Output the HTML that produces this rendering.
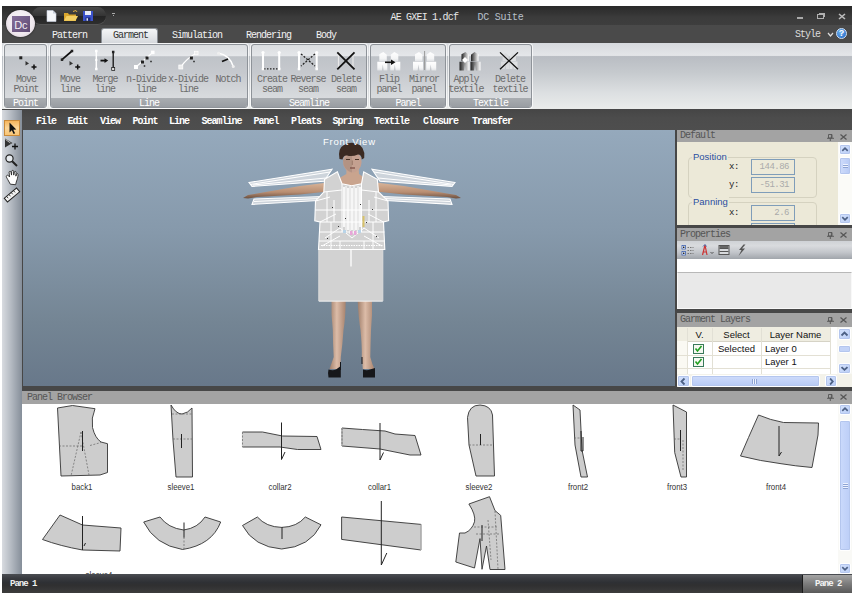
<!DOCTYPE html>
<html>
<head>
<meta charset="utf-8">
<title>DC Suite</title>
<style>
html,body{margin:0;padding:0;background:#fff;}
body{width:855px;height:598px;position:relative;overflow:hidden;font-family:"Liberation Mono",monospace;font-size:10px;letter-spacing:-1px;color:#333;}
.a{position:absolute;}
.t{position:absolute;white-space:nowrap;line-height:10px;}
#app{left:2px;top:6px;width:850px;height:587px;background:#474747;}
/* title */
#title{left:0;top:0;width:850px;height:20px;background:linear-gradient(#2a2a2a,#353535 40%,#3b3b3b 55%,#3e3e3e);}
#tabs{left:0;top:19px;width:850px;height:18px;background:#4a4a4a;}
#ribbon{left:0;top:37px;width:850px;height:66px;background:linear-gradient(#d6d9dd 0,#e3e5e8 18%,#e0e2e5 19.5%,#b9bdc3 20.5%,#c6cace 45%,#dcdfe1 75%,#eaeceb 100%);}
.grp{position:absolute;top:1px;height:64px;border:1px solid #8e9399;border-radius:3px;box-sizing:border-box;background:linear-gradient(#dadde0 0,#e4e6e9 17%,#bfc3c8 19%,#c6c9ce 45%,#d6d9dc 80%,#dddfe2 100%);box-shadow:0 0 0 1px rgba(255,255,255,.7);overflow:hidden;}
.grp .ft{position:absolute;left:0;right:0;bottom:0;height:9px;background:linear-gradient(#a9adb1,#999da2);color:#fff;text-align:center;line-height:11px;}
.lb{position:absolute;text-align:center;line-height:9.5px;color:#6c6c6c;white-space:nowrap;transform:translateX(-50%);}
#menubar{left:0;top:104px;width:850px;height:19.5px;background:linear-gradient(#464646,#4c4c4c 40%,#4e4e4e);}
.mi{position:absolute;top:7px;color:#fff;font-weight:bold;line-height:10px;white-space:nowrap;}
#ltool{left:0;top:104px;width:20px;height:464px;background:linear-gradient(90deg,#d8dbe0,#b4bac2 45%,#858e99);}
#view{left:21px;top:124px;width:651.5px;height:256px;background:linear-gradient(#95a9bc,#8699ab 40%,#748594 75%,#68788a 100%);}
.ph{position:absolute;background:#a3a3a3;color:#555;height:13px;line-height:13px;}
</style>
</head>
<body>
<div id="app" class="a">
  <div id="title" class="a">
    <div class="a" style="left:30px;top:1px;width:74px;height:17px;border-radius:9px;background:linear-gradient(#4a4a4a,#353535 50%,#242424 55%,#2e2e2e);box-shadow:0 1px 0 #555;"></div>
    <svg class="a" style="left:44px;top:4px" width="52" height="12" viewBox="0 0 52 12">
      <path d="M1 0.5h6l3 3v8h-9z" fill="#f4f6fa" stroke="#c9d2e0" stroke-width=".6"/>
      <path d="M7 0.5v3h3z" fill="#c5ccd8"/>
      <path d="M18 3h4l1 1.5h7v6.500h-12z" fill="#d9a62e"/>
      <path d="M18 10.800l2.500-4.800h11.500l-2.500 4.800z" fill="#f3cf63"/>
      <path d="M27 1.500l3-1 1 1.500" fill="none" stroke="#e0b040" stroke-width="1"/>
      <rect x="37" y="1" width="10" height="10" fill="#3b52c9"/>
      <rect x="39" y="1" width="6" height="4" fill="#e8ecf8"/>
      <rect x="39.500" y="7.500" width="5" height="3.500" fill="#1c2a7a"/>
      <rect x="40.500" y="8.200" width="1.500" height="2.500" fill="#dfe4f4"/>
    </svg>
    <div class="a" style="left:110px;top:7px;width:3px;height:1px;background:#aaa"></div>
    <div class="a" style="left:111px;top:9px;width:1px;height:1px;background:#aaa"></div>
    <div class="t" style="left:388.500px;top:6.500px;color:#e8e8e8;letter-spacing:-.8px">AE GXEI 1.dcf</div>
    <div class="t" style="left:475.500px;top:6.500px;color:#b8c0cc;letter-spacing:-.25px">DC Suite</div>
    <div class="a" style="left:795px;top:11px;width:6px;height:1.500px;background:#a9a9a9"></div>
    <div class="a" style="left:815px;top:8px;width:5px;height:2.500px;border:1px solid #b0b0b0"></div><div class="a" style="left:817px;top:7px;width:5px;height:1px;background:#b0b0b0"></div><div class="a" style="left:822px;top:7px;width:1px;height:4px;background:#b0b0b0"></div>
    <svg class="a" style="left:836px;top:7px" width="8" height="7" viewBox="0 0 8 7"><path d="M1 1l6 5M7 1l-6 5" stroke="#bdbdbd" stroke-width="1.600"/></svg>
  </div>
  <div id="tabs" class="a">
    <div class="a" style="left:99px;top:3px;width:57px;height:16px;border-radius:3px 3px 0 0;background:linear-gradient(#f4f5f6,#e2e4e7 60%,#d3d6da);border:1px solid #8a8f95;border-bottom:none;box-sizing:border-box"></div>
    <div class="t" style="left:50px;top:6px;color:#f2f2f2;">Pattern</div>
    <div class="t" style="left:111px;top:6px;color:#333;">Garment</div>
    <div class="t" style="left:170px;top:6px;color:#f2f2f2;">Simulation</div>
    <div class="t" style="left:244px;top:6px;color:#f2f2f2;">Rendering</div>
    <div class="t" style="left:314px;top:6px;color:#f2f2f2;">Body</div>
    <div class="t" style="left:793px;top:5px;color:#ddd;">Style</div>
    <svg class="a" style="left:825px;top:7px" width="7" height="5" viewBox="0 0 7 5"><path d="M1 1l2.500 3 2.500-3" stroke="#ddd" fill="none" stroke-width="1.200"/></svg>
    <div class="a" style="left:834px;top:3px;width:11px;height:11px;border-radius:6px;background:radial-gradient(circle at 40% 35%,#6fb4f0,#1a5fc0);border:1px solid #cfe2f8;box-sizing:border-box;color:#fff;font:bold 9px 'Liberation Sans',sans-serif;letter-spacing:0;text-align:center;line-height:9px;">?</div>
  </div>
  <div class="a" style="left:3.500px;top:3.500px;width:29.500px;height:27.500px;border-radius:50%;background:radial-gradient(ellipse at 50% 42%,#faf7f9 0,#efe8ee 60%,#d6ccd5 88%,#b3a8b2 100%);box-shadow:0 0 2px #111;"></div>
  <div class="a" style="left:10px;top:9.500px;width:17.500px;height:16px;background:linear-gradient(135deg,#866f9a,#5f4b74);color:#f4f0f6;font:11px 'Liberation Sans',sans-serif;letter-spacing:-.3px;text-align:center;line-height:18px;">Dc</div>
  <div id="ribbon" class="a">
    <div class="grp" style="left:2px;width:43px;"><div class="ft">Point</div></div>
    <div class="grp" style="left:48px;width:198px;"><div class="ft">Line</div></div>
    <div class="grp" style="left:249px;width:116px;"><div class="ft">Seamline</div></div>
    <div class="grp" style="left:368px;width:76px;"><div class="ft">Panel</div></div>
    <div class="grp" style="left:447px;width:83px;"><div class="ft">Textile</div></div>
    <div class="lb" style="left:24px;top:32px;">Move<br>Point</div>
    <div class="lb" style="left:68px;top:32px;">Move<br>line</div>
    <div class="lb" style="left:103px;top:32px;">Merge<br>line</div>
    <div class="lb" style="left:144px;top:32px;">n-Divide<br>line</div>
    <div class="lb" style="left:186px;top:32px;">x-Divide<br>line</div>
    <div class="lb" style="left:226px;top:32px;">Notch<br></div>
    <div class="lb" style="left:270px;top:32px;">Create<br>seam</div>
    <div class="lb" style="left:306px;top:32px;">Reverse<br>seam</div>
    <div class="lb" style="left:344px;top:32px;">Delete<br>seam</div>
    <div class="lb" style="left:387px;top:32px;">Flip<br>panel</div>
    <div class="lb" style="left:422px;top:32px;">Mirror<br>panel</div>
    <div class="lb" style="left:464px;top:32px;">Apply<br>textile</div>
    <div class="lb" style="left:508px;top:32px;">Delete<br>textile</div>
    <svg class="a" style="left:0;top:0" width="850" height="66" viewBox="2 43 850 66"><defs><linearGradient id="bw" x1="0" x2="1" y1="0" y2="0"><stop offset="0" stop-color="#222"/><stop offset="1" stop-color="#fff"/></linearGradient><linearGradient id="wg" x1="0" x2="0" y1="0" y2="1"><stop offset="0" stop-color="#fff"/><stop offset=".7" stop-color="#f4f5f6"/><stop offset="1" stop-color="#e0e2e5"/></linearGradient></defs>
<path d="M379.3 54.2 L383.3 52.0 L386.8 54.8 L386.8 61.2 L379.3 61.2z" fill="url(#wg)"/><path d="M377.3 61.8 L387.3 61.8 L387.3 70.5 L383.7 70.5 L382.8 64.6 L381.9 70.5 L377.3 70.5z" fill="url(#wg)"/><path d="M398.3 54.2 L394.3 52.0 L390.8 54.8 L390.8 61.2 L398.3 61.2z" fill="url(#wg)"/><path d="M400.3 61.8 L390.3 61.8 L390.3 70.5 L393.9 70.5 L394.8 64.6 L395.7 70.5 L400.3 70.5z" fill="url(#wg)"/><path d="M415.0 54.2 L419.0 52.0 L422.5 54.8 L422.5 61.2 L415.0 61.2z" fill="url(#wg)"/><path d="M413.0 61.8 L423.0 61.8 L423.0 70.5 L419.4 70.5 L418.5 64.6 L417.6 70.5 L413.0 70.5z" fill="url(#wg)"/><path d="M434.2 54.2 L430.2 52.0 L426.7 54.8 L426.7 61.2 L434.2 61.2z" fill="url(#wg)"/><path d="M436.2 61.8 L426.2 61.8 L426.2 70.5 L429.8 70.5 L430.7 64.6 L431.6 70.5 L436.2 70.5z" fill="url(#wg)"/><path d="M461.5 54.2 L465.5 52.0 L469.0 54.8 L469.0 61.2 L461.5 61.2z" fill="url(#bw)"/><path d="M459.5 61.8 L469.5 61.8 L469.5 70.5 L465.9 70.5 L465.0 64.6 L464.1 70.5 L459.5 70.5z" fill="url(#bw)"/><path d="M478.5 54.2 L474.5 52.0 L471.0 54.8 L471.0 61.2 L478.5 61.2z" fill="url(#bw)"/><path d="M480.5 61.8 L470.5 61.8 L470.5 70.5 L474.1 70.5 L475.0 64.6 L475.9 70.5 L480.5 70.5z" fill="url(#bw)"/><path d="M502.6 54.9 L505.8 53.0 L508.6 55.4 L508.6 61.0 L502.6 61.0z" fill="#d9dbde"/><path d="M501.0 61.5 L509.0 61.5 L509.0 69.0 L506.1 69.0 L505.4 63.9 L504.7 69.0 L501.0 69.0z" fill="#d9dbde"/><path d="M515.9 54.9 L512.7 53.0 L509.9 55.4 L509.9 61.0 L515.9 61.0z" fill="#dfe1e3"/><path d="M517.5 61.5 L509.5 61.5 L509.5 69.0 L512.4 69.0 L513.1 63.9 L513.8 69.0 L517.5 69.0z" fill="#dfe1e3"/>
<rect x="19.3" y="56.3" width="3" height="3" fill="#222"/><path d="M25.5 60.9l3.5 2.7-3.500 2z" fill="#333"/><path d="M31.5 67h5.0M34 64.5v5.0" stroke="#111" stroke-width="1.5"/><path d="M62 59.700L72 51" stroke="#111" stroke-width="1.7"/><rect x="60.75" y="58.45" width="2.5" height="2.5" fill="#222"/><rect x="70.75" y="49.75" width="2.5" height="2.5" fill="#222"/><path d="M69.5 60.9l3.5 2.7-3.500 2z" fill="#333"/><path d="M75.2 67h5.0M77.7 64.5v5.0" stroke="#111" stroke-width="1.5"/><path d="M96.300 51v18" stroke="#fff" stroke-width="1.500"/><rect x="95.05" y="49.75" width="2.5" height="2.5" fill="#fff"/><rect x="95.05" y="67.75" width="2.5" height="2.5" fill="#fff"/><rect x="95.3" y="59.0" width="2" height="2" fill="#fff"/><path d="M100.500 60.600h5" stroke="#111" stroke-width="1.800"/><path d="M104.500 58.300l3.700 2.300-3.700 2.300z" fill="#111"/><path d="M113.200 52v17" stroke="#111" stroke-width="1.300"/><rect x="111.95" y="50.75" width="2.5" height="2.5" fill="#222"/><rect x="111.7" y="67.5" width="3" height="3" fill="#ddd" stroke="#111" stroke-width=".7"/><path d="M136 67L152.800 52.400" stroke="#fff" stroke-width="1.200"/><rect x="134.0" y="65.0" width="4" height="4" fill="#fff"/><rect x="151.05" y="50.65" width="3.5" height="3.5" fill="#fff"/><rect x="141.0" y="60.5" width="3" height="3" fill="#222"/><rect x="145.5" y="56.5" width="3" height="3" fill="#222"/><rect x="143.75" y="65.25" width="1.5" height="1.5" fill="#222"/><rect x="150.25" y="60.75" width="1.5" height="1.5" fill="#222"/><path d="M180.800 67Q186 59 196.300 53" stroke="#fff" stroke-width="1.200" fill="none"/><rect x="178.8" y="65.0" width="4" height="4" fill="#eee" stroke="#fff" stroke-width=".7"/><rect x="194.55" y="51.25" width="3.5" height="3.5" fill="#eee" stroke="#fff" stroke-width=".7"/><rect x="189.9" y="56.5" width="3" height="3" fill="#222"/><rect x="193.25" y="60.75" width="1.5" height="1.5" fill="#222"/><path d="M218 53Q230 55 233.500 67" stroke="#fff" stroke-width="1.500" fill="none"/><circle cx="218.500" cy="53.300" r="1.500" fill="#eee"/><circle cx="233.300" cy="66.500" r="1.500" fill="#eee"/><path d="M222 61.500L228 59" stroke="#111" stroke-width="1.800"/><path d="M263 52v17M279.200 52v17" stroke="#fff" stroke-width="2"/><circle cx="263" cy="52.500" r="1.600" fill="#fff"/><circle cx="279.200" cy="52.500" r="1.600" fill="#fff"/><path d="M264 68.800h15" stroke="#222" stroke-width="1.200" stroke-dasharray="1.5 1.500"/><rect x="261.75" y="67.75" width="2.5" height="2.5" fill="#fff"/><rect x="277.95" y="67.75" width="2.5" height="2.5" fill="#fff"/><path d="M299 52v17M316.700 52v17" stroke="#fff" stroke-width="2"/><circle cx="299" cy="52.500" r="1.600" fill="#fff"/><circle cx="316.700" cy="52.500" r="1.600" fill="#fff"/><path d="M301 54l14 12M315 54l-14 12" stroke="#222" stroke-width="1.300" stroke-dasharray="2 1.500"/><rect x="297.75" y="67.75" width="2.5" height="2.5" fill="#fff"/><rect x="315.45" y="67.75" width="2.5" height="2.5" fill="#fff"/><path d="M338.500 53v16M353 53v16" stroke="#e8e8e8" stroke-width="1.200"/><path d="M337.300 52.400L354.500 69.300M354.500 52.400L337.300 69.300" stroke="#111" stroke-width="1.800"/><path d="M385 62.300h7" stroke="#111" stroke-width="1.600"/><path d="M391 59.500l4.500 2.800-4.500 2.800z" fill="#111"/><path d="M424.600 51v19" stroke="#999" stroke-width="1"/><path d="M465 57l3 3-3 3-3-3z" fill="#fff"/><path d="M500 52.400L518 69.300M518 52.400L500 69.300" stroke="#111" stroke-width="1.300"/>
</svg>
  </div>
  <div id="menubar" class="a">
    <div class="mi" style="left:34px">File</div>
    <div class="mi" style="left:65.5px">Edit</div>
    <div class="mi" style="left:98px">View</div>
    <div class="mi" style="left:130.5px">Point</div>
    <div class="mi" style="left:167px">Line</div>
    <div class="mi" style="left:199.5px">Seamline</div>
    <div class="mi" style="left:251.5px">Panel</div>
    <div class="mi" style="left:289px">Pleats</div>
    <div class="mi" style="left:330.5px">Spring</div>
    <div class="mi" style="left:372px">Textile</div>
    <div class="mi" style="left:421px">Closure</div>
    <div class="mi" style="left:470px">Transfer</div>
  </div>
  <div id="ltool" class="a">
    <div class="a" style="left:1.500px;top:9.500px;width:16.500px;height:16.500px;background:linear-gradient(#f6b55c,#fbd69a 50%,#f9c575);border:1px solid #c98a3a;box-sizing:border-box"></div>
    <svg class="a" style="left:0;top:0" width="20" height="110" viewBox="2 110 20 110">
      <path d="M9.500 122.500v10l2.300-2.200 1.800 3.700 1.500-.7-1.800-3.600 3-.200z" fill="#111"/>
      <path d="M5 138.500v9l7.500-4.500z" fill="#333"/><path d="M12 146.500h6M15 143.500v6" stroke="#111" stroke-width="1.300"/><path d="M5.500 139.500l5 3.500" stroke="#ddd" stroke-width=".8"/>
      <circle cx="9.500" cy="158.500" r="3.600" fill="#e6eaee" stroke="#222" stroke-width="1.200"/><path d="M12.200 161.300l4.800 4.700" stroke="#222" stroke-width="2"/>
      <path transform="translate(0.500 3.500) scale(.96)" style="transform-origin:11px 174px" d="M7 176c-1-2-2-3-1-4s2 0 3 1.500l-.5-5c0-1.200 1.800-1.200 2 0l.5 3 .2-4c.2-1.200 1.900-1.200 2 0l.1 4 .7-3.200c.3-1 1.800-.8 1.800.3l-.3 4 .8-2c.5-1 1.800-.5 1.600.5-.5 3-.8 5-1.600 6.500l-1 3.900-5.500-.5z" fill="#fff" stroke="#222" stroke-width=".9"/>
      <g transform="rotate(-40 12 195)"><rect x="4" y="192.500" width="16" height="5" fill="#f4f4f4" stroke="#222" stroke-width="1"/><path d="M7 192.500v2.500M10 192.500v2.500M13 192.500v2.500M16 192.500v2.500" stroke="#222" stroke-width=".8"/></g>
    </svg>
  </div>
  <div id="view" class="a"><svg class="a" style="left:0;top:0" width="653" height="256" viewBox="23 130 653 256">
<defs><linearGradient id="sk" x1="0" x2="0" y1="0" y2="1"><stop offset="0" stop-color="#d9b59a"/><stop offset=".6" stop-color="#b98e72"/><stop offset="1" stop-color="#6b5040"/></linearGradient><linearGradient id="lg" x1="0" x2="1" y1="0" y2="0"><stop offset="0" stop-color="#a07f6b"/><stop offset=".45" stop-color="#dcbca8"/><stop offset="1" stop-color="#a8846f"/></linearGradient></defs>
<polygon points="328.0,182.5 300.0,186.0 257.0,193.5 248.0,195.0 243.0,198.0 248.0,198.5 257.0,197.0 300.0,194.5 328.0,191.5" fill="url(#sk)"/><polygon points="376.0,182.5 404.0,186.0 447.0,193.5 456.0,195.0 461.0,198.0 456.0,198.5 447.0,197.0 404.0,194.5 376.0,191.5" fill="url(#sk)"/>
<polygon points="249.0,182.5 332.0,169.3 324.0,181.2 252.0,186.4" fill="rgba(225,228,232,.75)" stroke="#fff" stroke-width="1.1"/><polygon points="455.0,182.5 372.0,169.3 380.0,181.2 452.0,186.4" fill="rgba(225,228,232,.75)" stroke="#fff" stroke-width="1.1"/><polygon points="252.0,204.4 254.0,199.0 322.0,196.5 318.0,200.5" fill="rgba(225,228,232,.75)" stroke="#fff" stroke-width="1.1"/><polygon points="452.0,204.4 450.0,199.0 382.0,196.5 386.0,200.5" fill="rgba(225,228,232,.75)" stroke="#fff" stroke-width="1.1"/><path d="M250 184.500L330 172M253 185L326 178M254 201.500L320 198.500" stroke="#fff" stroke-width="1" fill="none"/><path d="M454 184.500L374 172M451 185L378 178M450 201.500L384 198.500" stroke="#fff" stroke-width="1" fill="none"/>
<path d="M331.500 301L345.700 301Q345.500 318 343.500 330Q342.500 345 340.800 357Q340.500 364 340.300 369L329.500 369Q332 362 333.700 357Q333 345 332.800 330Q331 315 331.500 301z" fill="url(#lg)"/><path d="M357.700 301L372 301Q372.500 315 371 330Q370.500 345 370.300 357Q372 364 374.500 369L362.800 369Q362.300 362 361.800 357Q362 345 360.500 330Q358.500 318 357.700 301z" fill="url(#lg)"/>
<path d="M328.500 369.500Q333 371 336 369.500L340.800 366L340.800 377.600L328.500 377.600Q327.500 373 328.500 369.500z" fill="#16171a"/><path d="M340.500 362v8" stroke="#16171a" stroke-width="1"/><path d="M363 369.500Q367 371 370 369.500L375 368L375 377.600L363 377.600z" fill="#16171a"/><path d="M362 357v7" stroke="#16171a" stroke-width="1"/>
<path d="M346.500 166L358.500 166L359 174Q363 176.500 365 178.500L363 188L341 188L338.500 178.500Q342 176.500 346.300 174z" fill="#c9a48e"/><ellipse cx="352.300" cy="162" rx="9.300" ry="10.500" fill="#c4a090"/><path d="M343 160Q343 170 352 172.500L352 152z" fill="#a98a7c" opacity=".6"/><path d="M339.500 159Q337.500 148 344 145Q350 141.500 356 143.500Q365.500 146 364.200 158L361.800 159.500Q361.500 154.500 358 154.500Q352 157 347 155.500Q343.500 155 342.500 159.500z" fill="#3b2a22"/><path d="M346 159.500h4M355 159.500h4" stroke="#4a3428" stroke-width="1"/><path d="M350 168h5" stroke="#7a4a42" stroke-width="1.200"/><path d="M352.300 160.500v4.500" stroke="#9a7868" stroke-width="1"/>
<rect x="318.800" y="249" width="64" height="52" fill="#d2d2d2"/><path d="M318.800 301.200h64" stroke="#f4f4f4" stroke-width="1"/><path d="M318.800 249v52M382.800 249v52" stroke="#dcdcdc" stroke-width="1"/>
<polygon points="337.4,171.8 324.6,179.3 323.8,192.0 315.5,201.0 314.8,220.7 320.0,222.0 318.5,249.5 384.8,249.5 383.5,222.0 388.6,220.7 388.0,201.0 378.5,192.0 377.3,179.3 363.7,171.8 361.5,183.8 351.7,185.8 342.0,183.8" fill="#d2d2d2" stroke="#fff" stroke-width="1.1"/><g stroke="#fff" stroke-width="1" fill="none"><path d="M342 184v48M346 186v46M350 186v48M354 186v48M358 186v46M361.500 184v48"/><path d="M344 187v40M348 188v42M352 188v42M356 188v42M360 187v40" stroke-width="1.600"/><path d="M323.800 192L342 190M378.500 192L361.500 190M315.500 201L330 197M388 201L374 197M320 222L336 214M383.500 222L368 214M315 210h73M320 222h63.500M319 232h65.500M319 241h65.800M331 222v27.500M373 222v27.500M340 241v8.500M364 241v8.500M327 192v30M376 192v30M334 200v22M369 200v22"/><path d="M325 238L340 228L352 238L364 228L379 238M322 246L340 236M382 246L364 236"/><path d="M351 249.500v17" stroke-width="1.300"/></g><path d="M321 245.500h62" stroke="#fff" stroke-width="1" stroke-dasharray="1.5 1"/><rect x="362.500" y="216" width="2" height="11" fill="#d8c26a"/><rect x="350" y="231" width="2.500" height="4" fill="#e7a6d8"/><rect x="354" y="231" width="2.500" height="4" fill="#e7a6d8"/><rect x="343" y="230" width="3" height="3" fill="#b8d4e8"/><rect x="358" y="230" width="3" height="3" fill="#b8d4e8"/><g fill="#333"><rect x="332" y="207" width="1" height="1"/><rect x="372" y="209" width="1" height="1"/><rect x="345" y="218" width="1" height="1"/><rect x="366" y="222" width="1" height="1"/><rect x="338" y="226" width="1" height="1"/><rect x="360" y="204" width="1" height="1"/><rect x="376" y="236" width="1" height="1"/><rect x="327" y="238" width="1" height="1"/></g>
<text x="323" y="145" fill="#fff" font-family="Liberation Sans, sans-serif" font-size="9.500" letter-spacing="0" textLength="52">Front View</text>
</svg></div>
  <!--RIGHT-->
  <div class="ph" style="left:675px;top:124px;width:175px;height:12px;line-height:12px;"><span style="margin-left:3px">Default</span></div><svg class="a" style="left:825px;top:128px" width="7" height="7" viewBox="0 0 7 7"><path d="M1.500 .5h3.500v3.500h-3.500zM0 4.300h7M3.300 4.300v2.700" stroke="#555" fill="none" stroke-width=".9"/><path d="M4.400 .5v3.500" stroke="#555" stroke-width=".9"/></svg><svg class="a" style="left:838px;top:128px" width="7" height="6" viewBox="0 0 7 6"><path d="M.5 .5l6 5M6.500 .5l-6 5" stroke="#555" stroke-width="1.200"/></svg><div class="a" style="left:675px;top:136px;width:175px;height:83px;background:#ece9d8;overflow:hidden;font-family:'Liberation Sans',sans-serif;letter-spacing:0"><div class="a" style="left:11px;top:15px;width:127px;height:39px;border:1px solid #d5d2c0;border-radius:4px;"></div><div class="a" style="left:11px;top:60px;width:127px;height:39px;border:1px solid #d5d2c0;border-radius:4px;"></div><div class="a" style="left:15px;top:9px;background:#ece9d8;color:#2a4fa0;font-size:9.500px;line-height:11px;padding:0 1px;">Position</div><div class="a" style="left:15px;top:54px;background:#ece9d8;color:#2a4fa0;font-size:9.500px;line-height:11px;padding:0 1px;">Panning</div><div class="a" style="left:74px;top:17px;width:44px;height:16px;border:1px solid #7f9db9;box-sizing:border-box;background:#ece9d8;color:#aaa;font-size:9px;line-height:14px;text-align:right;padding-right:5px;font-family:'Liberation Mono',monospace;letter-spacing:-.5px">144.86</div><div class="a" style="left:52px;top:20px;color:#222;font-size:9px;line-height:10px;font-family:'Liberation Mono',monospace;letter-spacing:-.5px">x:</div><div class="a" style="left:74px;top:35px;width:44px;height:16px;border:1px solid #7f9db9;box-sizing:border-box;background:#ece9d8;color:#aaa;font-size:9px;line-height:14px;text-align:right;padding-right:5px;font-family:'Liberation Mono',monospace;letter-spacing:-.5px">-51.31</div><div class="a" style="left:52px;top:38px;color:#222;font-size:9px;line-height:10px;font-family:'Liberation Mono',monospace;letter-spacing:-.5px">y:</div><div class="a" style="left:74px;top:63px;width:44px;height:16px;border:1px solid #7f9db9;box-sizing:border-box;background:#ece9d8;color:#aaa;font-size:9px;line-height:14px;text-align:right;padding-right:5px;font-family:'Liberation Mono',monospace;letter-spacing:-.5px">2.6</div><div class="a" style="left:52px;top:66px;color:#222;font-size:9px;line-height:10px;font-family:'Liberation Mono',monospace;letter-spacing:-.5px">x:</div><div class="a" style="left:74px;top:81px;width:44px;height:16px;border:1px solid #7f9db9;box-sizing:border-box;background:#ece9d8;color:#aaa;font-size:9px;line-height:14px;text-align:right;padding-right:5px;font-family:'Liberation Mono',monospace;letter-spacing:-.5px">0</div><div class="a" style="left:52px;top:84px;color:#222;font-size:9px;line-height:10px;font-family:'Liberation Mono',monospace;letter-spacing:-.5px">y:</div><div class="a" style="left:161px;top:0;width:14px;height:83px;background:#fbfbf8"></div><div class="a" style="left:162px;top:2px;width:12px;height:11px;border-radius:2px;background:linear-gradient(135deg,#d6e3fc,#b9cdf6);border:1px solid #fff;box-shadow:0 0 0 1px #b4c6ee inset;box-sizing:border-box"><svg width="10" height="9" viewBox="0 0 11 10" preserveAspectRatio="none" style="position:absolute;left:0;top:0"><path d="M2.500 6.500l3-3 3 3" stroke="#4d6185" stroke-width="1.800" fill="none"/></svg></div><div class="a" style="left:162px;top:71px;width:12px;height:11px;border-radius:2px;background:linear-gradient(135deg,#d6e3fc,#b9cdf6);border:1px solid #fff;box-shadow:0 0 0 1px #b4c6ee inset;box-sizing:border-box"><svg width="10" height="9" viewBox="0 0 11 10" preserveAspectRatio="none" style="position:absolute;left:0;top:0"><path d="M2.500 3.500l3 3 3-3" stroke="#4d6185" stroke-width="1.800" fill="none"/></svg></div><div class="a" style="left:162px;top:15px;width:12px;height:18px;border-radius:2px;background:linear-gradient(90deg,#cfdcfb,#b7caf5);border:1px solid #fff;box-shadow:0 0 0 1px #b4c6ee inset;box-sizing:border-box"><div class="a" style="left:3px;top:6px;width:5px;height:1px;background:#eef3ff;box-shadow:0 2px 0 #eef3ff,0 1px 0 #8ea4d4,0 3px 0 #8ea4d4"></div></div></div><div class="ph" style="left:675px;top:222px;width:175px;height:13px;line-height:13px;"><span style="margin-left:3px">Properties</span></div><svg class="a" style="left:825px;top:226px" width="7" height="7" viewBox="0 0 7 7"><path d="M1.500 .5h3.500v3.500h-3.500zM0 4.300h7M3.300 4.300v2.700" stroke="#555" fill="none" stroke-width=".9"/><path d="M4.400 .5v3.500" stroke="#555" stroke-width=".9"/></svg><svg class="a" style="left:838px;top:226px" width="7" height="6" viewBox="0 0 7 6"><path d="M.5 .5l6 5M6.500 .5l-6 5" stroke="#555" stroke-width="1.200"/></svg><div class="a" style="left:675px;top:235px;width:175px;height:18.500px;background:linear-gradient(#cfd2d6,#d9dbde 25%,#c2c5ca 60%,#9ba0a6)"></div><svg class="a" style="left:675px;top:236px" width="80" height="18" viewBox="677 242 80 18"><g fill="#fff" stroke="#3a5fb0" stroke-width=".8"><rect x="682" y="245.500" width="3.500" height="3.500"/><rect x="682" y="251.500" width="3.500" height="3.500"/></g><g fill="#222"><rect x="683" y="246.500" width="1.500" height="1.500"/><rect x="683" y="252.500" width="1.500" height="1.500"/></g><g stroke="#777" stroke-width="1"><path d="M687.500 247.500h6M687.500 250.500h6M687.500 253.500h6" stroke-dasharray="1.500 1"/></g><g transform="translate(3.500 0)"><path d="M699 255l2.500-10 2 10M699.800 252h3.600" stroke="#c33" stroke-width="1.200" fill="none"/><path d="M699.500 246.500l2-2 1.500 2" stroke="#46a" stroke-width="1" fill="none"/><path d="M707 252l1.500 1.500 1.500-1.500" stroke="#333" stroke-width=".8" fill="none"/></g><g transform="translate(5.500 0)"><rect x="713.500" y="245.500" width="10" height="9" fill="#d8dadd" stroke="#555" stroke-width="1"/><path d="M714 248.500h9M714 251.500h9" stroke="#555" stroke-width="1"/><rect x="714" y="246" width="9" height="2" fill="#666"/></g><g transform="translate(7.500 0.500)"><path d="M736 244l-4.500 5.500h2.500l-3 6 6.500-7.500h-3l3.500-4z" fill="#555"/></g></svg><div class="a" style="left:675px;top:253px;width:175px;height:13px;background:#fff"></div><div class="a" style="left:675px;top:266px;width:175px;height:37px;background:#e9e9e9;border:1px solid #f8f8f8;border-top:1px solid #b8b8b8;box-sizing:border-box"></div><div class="ph" style="left:675px;top:307px;width:175px;height:14px;line-height:14px;"><span style="margin-left:3px">Garment Layers</span></div><svg class="a" style="left:825px;top:311px" width="7" height="7" viewBox="0 0 7 7"><path d="M1.500 .5h3.500v3.500h-3.500zM0 4.300h7M3.300 4.300v2.700" stroke="#555" fill="none" stroke-width=".9"/><path d="M4.400 .5v3.500" stroke="#555" stroke-width=".9"/></svg><svg class="a" style="left:838px;top:311px" width="7" height="6" viewBox="0 0 7 6"><path d="M.5 .5l6 5M6.500 .5l-6 5" stroke="#555" stroke-width="1.200"/></svg><div class="a" style="left:675px;top:321px;width:175px;height:60px;background:#fff;overflow:hidden;font-family:'Liberation Sans',sans-serif;letter-spacing:0;font-size:9.500px;color:#111"><div class="a" style="left:0;top:0;width:154px;height:14px;background:#efede1;border-bottom:1px solid #d6d3c6"></div><div class="a" style="left:0;top:14px;width:10px;height:33px;background:#faf9f3"></div><div class="a" style="left:10px;top:1px;width:1px;height:46px;background:#e2e0d5"></div><div class="a" style="left:35px;top:1px;width:1px;height:46px;background:#e2e0d5"></div><div class="a" style="left:84px;top:1px;width:1px;height:46px;background:#e2e0d5"></div><div class="a" style="left:153px;top:1px;width:1px;height:46px;background:#e2e0d5"></div><div class="a" style="left:0;top:28px;width:154px;height:1px;background:#e3e0d4"></div><div class="a" style="left:0;top:41px;width:154px;height:1px;background:#e3e0d4"></div><div class="a" style="left:10px;top:2px;width:25px;text-align:center;line-height:11px">V.</div><div class="a" style="left:35px;top:2px;width:49px;text-align:center;line-height:11px">Select</div><div class="a" style="left:84px;top:2px;width:69px;text-align:center;line-height:11px">Layer Name</div><div class="a" style="left:35px;top:16px;width:49px;text-align:center;line-height:11px">Selected</div><div class="a" style="left:88px;top:16px;line-height:11px">Layer 0</div><div class="a" style="left:88px;top:29px;line-height:11px">Layer 1</div><div class="a" style="left:16px;top:17px;width:11px;height:10px;border:1px solid #3a7a5a;box-sizing:border-box;background:#f6f8f2"><svg width="9" height="8" viewBox="0 0 9 8" style="position:absolute;left:0;top:0"><path d="M1.500 3.500l2 2.500 4-5" stroke="#21a121" stroke-width="1.600" fill="none"/></svg></div><div class="a" style="left:16px;top:30px;width:11px;height:10px;border:1px solid #3a7a5a;box-sizing:border-box;background:#f6f8f2"><svg width="9" height="8" viewBox="0 0 9 8" style="position:absolute;left:0;top:0"><path d="M1.500 3.500l2 2.500 4-5" stroke="#21a121" stroke-width="1.600" fill="none"/></svg></div><div class="a" style="left:160px;top:0;width:15px;height:47px;background:#f7f7f3"></div><div class="a" style="left:161px;top:1px;width:13px;height:12px;border-radius:2px;background:linear-gradient(135deg,#d6e3fc,#b9cdf6);border:1px solid #fff;box-shadow:0 0 0 1px #b4c6ee inset;box-sizing:border-box"><svg width="11" height="10" viewBox="0 0 11 10" preserveAspectRatio="none" style="position:absolute;left:0;top:0"><path d="M2.500 6.500l3-3 3 3" stroke="#4d6185" stroke-width="1.800" fill="none"/></svg></div><div class="a" style="left:161px;top:36px;width:13px;height:11px;border-radius:2px;background:linear-gradient(135deg,#d6e3fc,#b9cdf6);border:1px solid #fff;box-shadow:0 0 0 1px #b4c6ee inset;box-sizing:border-box"><svg width="11" height="9" viewBox="0 0 11 10" preserveAspectRatio="none" style="position:absolute;left:0;top:0"><path d="M2.500 3.500l3 3 3-3" stroke="#4d6185" stroke-width="1.800" fill="none"/></svg></div><div class="a" style="left:161px;top:18px;width:13px;height:8px;border-radius:2px;background:#c3d3f7;border:1px solid #fff;box-shadow:0 0 0 1px #b4c6ee inset;box-sizing:border-box"></div><div class="a" style="left:0;top:47px;width:175px;height:13px;background:#f3f2ea"></div><div class="a" style="left:0px;top:48px;width:13px;height:12px;border-radius:2px;background:linear-gradient(135deg,#d6e3fc,#b9cdf6);border:1px solid #fff;box-shadow:0 0 0 1px #b4c6ee inset;box-sizing:border-box"><svg width="11" height="10" viewBox="0 0 11 10" preserveAspectRatio="none" style="position:absolute;left:0;top:0"><path d="M6.500 2.500l-3 3 3 3" stroke="#4d6185" stroke-width="1.800" fill="none"/></svg></div><div class="a" style="left:148px;top:48px;width:12px;height:12px;border-radius:2px;background:linear-gradient(135deg,#d6e3fc,#b9cdf6);border:1px solid #fff;box-shadow:0 0 0 1px #b4c6ee inset;box-sizing:border-box"><svg width="10" height="10" viewBox="0 0 11 10" preserveAspectRatio="none" style="position:absolute;left:0;top:0"><path d="M4.500 2.500l3 3-3 3" stroke="#4d6185" stroke-width="1.800" fill="none"/></svg></div><div class="a" style="left:14px;top:48px;width:129px;height:12px;border-radius:2px;background:linear-gradient(#cfdcfb,#b7caf5);border:1px solid #fff;box-shadow:0 0 0 1px #b4c6ee inset;box-sizing:border-box"><div class="a" style="left:60px;top:3px;width:1px;height:5px;background:#8ea4d4;box-shadow:2px 0 0 #8ea4d4,4px 0 0 #8ea4d4,1px 0 0 #eef3ff,3px 0 0 #eef3ff"></div></div></div>
  <!--/RIGHT-->
  <div class="ph" style="left:20px;top:384.500px;width:830px;height:13.500px;line-height:13.500px;z-index:2"><span style="margin-left:5px">Panel Browser</span></div><svg class="a" style="left:825px;top:388px;z-index:3" width="7" height="7" viewBox="0 0 7 7"><path d="M1.500 .5h3.500v3.500h-3.500zM0 4.300h7M3.300 4.300v2.700" stroke="#555" fill="none" stroke-width=".9"/><path d="M4.400 .5v3.500" stroke="#555" stroke-width=".9"/></svg><svg class="a" style="left:838px;top:388px;z-index:3" width="7" height="6" viewBox="0 0 7 6"><path d="M.5 .5l6 5M6.500 .5l-6 5" stroke="#555" stroke-width="1.200"/></svg><div class="a" style="left:20px;top:397px;width:830px;height:171px;background:#fff;overflow:hidden"><svg class="a" style="left:0;top:0" width="830" height="171" viewBox="22 403 830 171"><path d="M57.500 408L72.500 405.500L95 408.700Q91 418 92.500 427.500Q95 438 101 442L107.500 443.700L107.500 472.500L100 475L61 476z" fill="#cdcdcd" stroke="#333" stroke-width=".9" stroke-linejoin="round"/><path d="M59 446h24M90 445.500l11-3M81 432l-10 44M81 432l8 43" stroke="#666" stroke-width=".7" stroke-dasharray="2 1.500" fill="none"/><path d="M82.500 431v20" stroke="#222" stroke-width="1" fill="none"/><path d="M171 405Q176 414 182 414Q188 413 192 408L192.500 477L176 477L173 440z" fill="#cdcdcd" stroke="#333" stroke-width=".9" stroke-linejoin="round"/><path d="M172 414h20M173 439h19" stroke="#666" stroke-width=".7" stroke-dasharray="2 1.500" fill="none"/><path d="M181.500 434v14" stroke="#222" stroke-width="1" fill="none"/><path d="M242.500 432L262.500 432L282.500 436L317 436.500L321 449.500L297.500 449.500L280 447L242.500 447z" fill="#cdcdcd" stroke="#333" stroke-width=".9" stroke-linejoin="round"/><path d="M242.500 432v15" stroke="#cdcdcd" stroke-width="1.200"/><path d="M242.500 432v15" stroke="#666" stroke-width=".7" stroke-dasharray="2 1.500" fill="none"/><path d="M281.500 422.500v37l3.500-7.500" stroke="#222" stroke-width="1" fill="none"/><path d="M342 428L362.500 429.500L385 431L395 434L415 435.500L421 455L410 455L380 449L342 446z" fill="#cdcdcd" stroke="#333" stroke-width=".9" stroke-linejoin="round"/><path d="M342 428v18" stroke="#cdcdcd" stroke-width="1.200"/><path d="M342 428v18" stroke="#666" stroke-width=".7" stroke-dasharray="2 1.500" fill="none"/><path d="M380 423v37l3.500-7.500" stroke="#222" stroke-width="1" fill="none"/><path d="M467.500 417.500Q469 405 480 405Q491 405.500 492.500 415L494.500 476L476 476L469 445z" fill="#cdcdcd" stroke="#333" stroke-width=".9" stroke-linejoin="round"/><path d="M469 445h24" stroke="#666" stroke-width=".7" stroke-dasharray="2 1.500" fill="none"/><path d="M480.500 434v11" stroke="#222" stroke-width="1" fill="none"/><path d="M573 405L580 410L582 450L587.500 477L581 477L575 445z" fill="#cdcdcd" stroke="#333" stroke-width=".9" stroke-linejoin="round"/><path d="M574 438h7" stroke="#666" stroke-width=".7" stroke-dasharray="2 1.500" fill="none"/><path d="M581 431v20h2v-14" stroke="#222" stroke-width="1" fill="none"/><path d="M673 405L686.500 412L686.500 477L681 477L674.700 452.500z" fill="#cdcdcd" stroke="#333" stroke-width=".9" stroke-linejoin="round"/><path d="M674 439h6M683 440v30" stroke="#666" stroke-width=".7" stroke-dasharray="2 1.500" fill="none"/><path d="M680.500 430v21" stroke="#222" stroke-width="1" fill="none"/><path d="M758.500 415Q770 420 783.500 422.500L818.500 423L818 435L812 467.500Q795 466 781 463.700Q760 461 740.500 456L748.500 437.500z" fill="#cdcdcd" stroke="#333" stroke-width=".9" stroke-linejoin="round"/><path d="M779 426v30l2.500-4" stroke="#222" stroke-width="1" fill="none"/><path d="M60 515L82.500 525L121 528L120 551L82.500 550Q60 546 42.500 539.500z" fill="#cdcdcd" stroke="#333" stroke-width=".9" stroke-linejoin="round"/><path d="M82.500 516v34M84 546l1.500-3" stroke="#222" stroke-width="1" fill="none"/><path d="M143.700 522L160 517Q168 528 183.700 530Q198 528 205 517L220.700 522Q212 545 182.500 549.500Q155 545 143.700 522z" fill="#cdcdcd" stroke="#333" stroke-width=".9" stroke-linejoin="round"/><path d="M184 522.500v15" stroke="#222" stroke-width="1" fill="none"/><path d="M184 537v12" stroke="#666" stroke-width=".7" stroke-dasharray="2 1.500" fill="none"/><path d="M242.500 525.500L257.400 517Q266 527 281.700 527.400Q297 527 305.300 517L321 524.800Q310 547 281.700 549Q254 547 242.500 525.500z" fill="#cdcdcd" stroke="#333" stroke-width=".9" stroke-linejoin="round"/><path d="M282 527v12" stroke="#222" stroke-width="1" fill="none"/><path d="M341.600 517L421 524.400L421 550L341.600 539.400z" fill="#cdcdcd" stroke="#333" stroke-width=".9" stroke-linejoin="round"/><path d="M421 524.400v25.600" stroke="#cdcdcd" stroke-width="1.200"/><path d="M381.300 501v64l5.500-12" stroke="#222" stroke-width="1" fill="none"/><path d="M489.500 496.700L468.900 504Q476 515 474.500 521.800Q472 530 465 533L459.500 533L455.800 562L474.500 568L480 538.600L482 569.300L486.500 546L490 569.500L505 569.500L500.700 515.400L495 510.600z" fill="#cdcdcd" stroke="#333" stroke-width=".9" stroke-linejoin="round"/><path d="M474 527h24M476 534h23M495 511l3 58M488 520l3 40" stroke="#666" stroke-width=".7" stroke-dasharray="2 1.500" fill="none"/><path d="M482 525v16" stroke="#222" stroke-width="1" fill="none"/><text transform="translate(82 489.500) scale(.87 1)" x="0" y="0" font-family="Liberation Sans, sans-serif" font-size="9" fill="#333" text-anchor="middle" letter-spacing="0">back1</text><text transform="translate(181 489.500) scale(.87 1)" x="0" y="0" font-family="Liberation Sans, sans-serif" font-size="9" fill="#333" text-anchor="middle" letter-spacing="0">sleeve1</text><text transform="translate(280 489.500) scale(.87 1)" x="0" y="0" font-family="Liberation Sans, sans-serif" font-size="9" fill="#333" text-anchor="middle" letter-spacing="0">collar2</text><text transform="translate(379.5 489.500) scale(.87 1)" x="0" y="0" font-family="Liberation Sans, sans-serif" font-size="9" fill="#333" text-anchor="middle" letter-spacing="0">collar1</text><text transform="translate(479 489.500) scale(.87 1)" x="0" y="0" font-family="Liberation Sans, sans-serif" font-size="9" fill="#333" text-anchor="middle" letter-spacing="0">sleeve2</text><text transform="translate(578 489.500) scale(.87 1)" x="0" y="0" font-family="Liberation Sans, sans-serif" font-size="9" fill="#333" text-anchor="middle" letter-spacing="0">front2</text><text transform="translate(677 489.500) scale(.87 1)" x="0" y="0" font-family="Liberation Sans, sans-serif" font-size="9" fill="#333" text-anchor="middle" letter-spacing="0">front3</text><text transform="translate(776 489.500) scale(.87 1)" x="0" y="0" font-family="Liberation Sans, sans-serif" font-size="9" fill="#333" text-anchor="middle" letter-spacing="0">front4</text><text transform="translate(99 578) scale(.87 1)" x="0" y="0" font-family="Liberation Sans, sans-serif" font-size="9" fill="#333" text-anchor="middle" letter-spacing="0">sleeve4</text></svg><div class="a" style="left:816px;top:0;width:14px;height:171px;background:#f9f9f6"></div><div class="a" style="left:817px;top:1px;width:12px;height:11px;border-radius:2px;background:linear-gradient(135deg,#d6e3fc,#b9cdf6);border:1px solid #fff;box-shadow:0 0 0 1px #b4c6ee inset;box-sizing:border-box"><svg width="10" height="9" viewBox="0 0 11 10" preserveAspectRatio="none" style="position:absolute;left:0;top:0"><path d="M2.500 6.500l3-3 3 3" stroke="#4d6185" stroke-width="1.800" fill="none"/></svg></div><div class="a" style="left:817px;top:160px;width:12px;height:11px;border-radius:2px;background:linear-gradient(135deg,#d6e3fc,#b9cdf6);border:1px solid #fff;box-shadow:0 0 0 1px #b4c6ee inset;box-sizing:border-box"><svg width="10" height="9" viewBox="0 0 11 10" preserveAspectRatio="none" style="position:absolute;left:0;top:0"><path d="M2.500 3.500l3 3 3-3" stroke="#4d6185" stroke-width="1.800" fill="none"/></svg></div><div class="a" style="left:817px;top:17px;width:12px;height:131px;border-radius:2px;background:linear-gradient(90deg,#cbdafc,#bccef7);border:1px solid #fff;box-shadow:0 0 0 1px #b4c6ee inset;box-sizing:border-box"><div class="a" style="left:3px;top:62px;width:5px;height:1px;background:#eef3ff;box-shadow:0 2px 0 #eef3ff,0 4px 0 #eef3ff,0 1px 0 #8ea4d4,0 3px 0 #8ea4d4,0 5px 0 #8ea4d4"></div></div></div><div class="a" style="left:0px;top:568px;width:850px;height:19px;background:linear-gradient(#4b4e53,#393b40 22%,#2e3034 45%,#303031 60%,#3c3c3c)"></div><div class="a" style="left:800px;top:569px;width:50px;height:18px;background:linear-gradient(#a4a4a4,#7b7b7b 50%,#595959);border-left:1px solid #1a1a1a;box-sizing:border-box"></div><div class="t" style="left:8px;top:573px;color:#f0f0f0;font-weight:bold;font-size:9px">Pane 1</div><div class="t" style="left:813px;top:573px;color:#f4f4f4;font-weight:bold;font-size:9px">Pane 2</div>
</div>
</body>
</html>
